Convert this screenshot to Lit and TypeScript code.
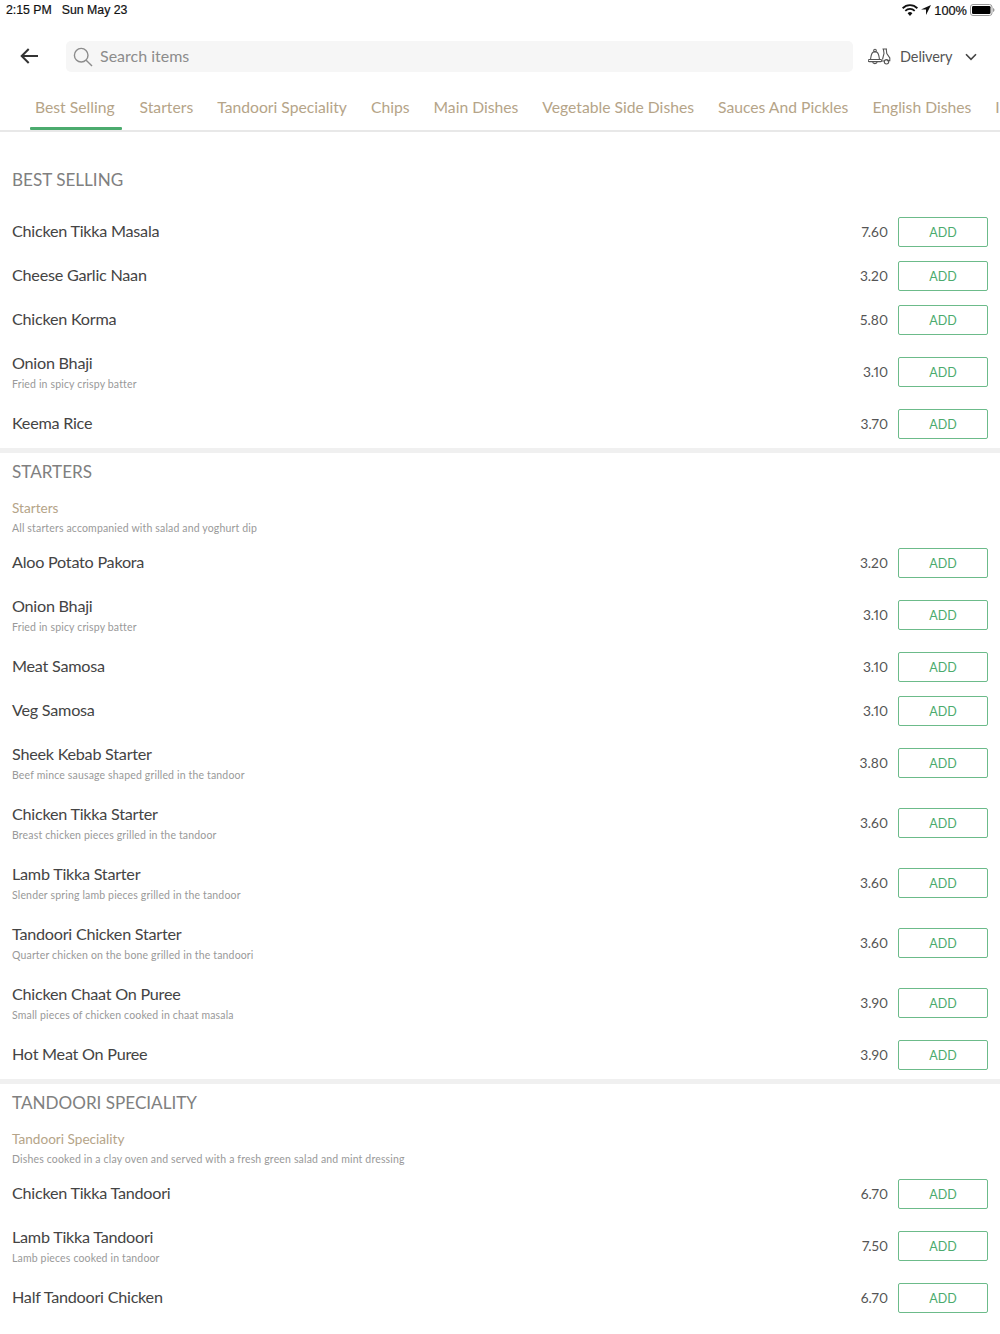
import { LitElement, html, css, svg } from "lit";
import { customElement } from "lit/decorators.js";

type Item = { n: string; p: string; d?: string };
type Sec = { t: string; sub?: string; note?: string; items: Item[] };

const TABS = ["Best Selling", "Starters", "Tandoori Speciality", "Chips", "Main Dishes", "Vegetable Side Dishes", "Sauces And Pickles", "English Dishes", "Indian Dishes"];

const SECTIONS: Sec[] = [
  { t: "BEST SELLING", items: [
    { n: "Chicken Tikka Masala", p: "7.60" },
    { n: "Cheese Garlic Naan", p: "3.20" },
    { n: "Chicken Korma", p: "5.80" },
    { n: "Onion Bhaji", p: "3.10", d: "Fried in spicy crispy batter" },
    { n: "Keema Rice", p: "3.70" },
  ]},
  { t: "STARTERS", sub: "Starters", note: "All starters accompanied with salad and yoghurt dip", items: [
    { n: "Aloo Potato Pakora", p: "3.20" },
    { n: "Onion Bhaji", p: "3.10", d: "Fried in spicy crispy batter" },
    { n: "Meat Samosa", p: "3.10" },
    { n: "Veg Samosa", p: "3.10" },
    { n: "Sheek Kebab Starter", p: "3.80", d: "Beef mince sausage shaped grilled in the tandoor" },
    { n: "Chicken Tikka Starter", p: "3.60", d: "Breast chicken pieces grilled in the tandoor" },
    { n: "Lamb Tikka Starter", p: "3.60", d: "Slender spring lamb pieces grilled in the tandoor" },
    { n: "Tandoori Chicken Starter", p: "3.60", d: "Quarter chicken on the bone grilled in the tandoori" },
    { n: "Chicken Chaat On Puree", p: "3.90", d: "Small pieces of chicken cooked in chaat masala" },
    { n: "Hot Meat On Puree", p: "3.90" },
  ]},
  { t: "TANDOORI SPECIALITY", sub: "Tandoori Speciality", note: "Dishes cooked in a clay oven and served with a fresh green salad and mint dressing", items: [
    { n: "Chicken Tikka Tandoori", p: "6.70" },
    { n: "Lamb Tikka Tandoori", p: "7.50", d: "Lamb pieces cooked in tandoor" },
    { n: "Half Tandoori Chicken", p: "6.70" },
  ]},
];

@customElement("app-root")
export class AppRoot extends LitElement {
  static styles = css`
    :host { display: block; width: 1000px; height: 1334px; overflow: hidden; background: #fff; font-family: Lato, "Open Sans", sans-serif; color: #444; font-feature-settings: "pnum"; }
    .status { height: 20px; display: flex; align-items: center; justify-content: space-between; padding: 0 5px 0 6px; font: 12.3px "Liberation Sans", sans-serif; color: #111; -webkit-text-stroke: .2px #111; }
    .status .l { display: flex; gap: 10px; }
    .status .r { display: flex; align-items: center; gap: 3px; font-size: 12.8px; }
    .bar { height: 72px; display: flex; align-items: center; padding-top: 1px; box-sizing: border-box; }
    .back { width: 66px; display: flex; justify-content: center; padding: 0 9px 2px 0; box-sizing: border-box; }
    .search { width: 787px; height: 31px; background: #f6f6f6; border-radius: 5px; display: flex; align-items: center; gap: 7px; padding-left: 7px; box-sizing: border-box; color: #8c8c8c; font-size: 16px; }
    .search span { margin-bottom: 2px; }
    .del { display: flex; align-items: center; margin-left: 15px; font-size: 14.5px; letter-spacing: -.1px; color: #555; }
    .del .txt { margin: 0 13px 1px 9px; }
    .tabs { height: 38px; display: flex; gap: 12px; padding-left: 29px; border-bottom: 2px solid #e8e8e8; overflow: hidden; box-sizing: content-box; }
    .tab { flex: none; padding: 0 6px; height: 38px; box-sizing: border-box; font-size: 15.7px; color: #b5a488; line-height: 30px; position: relative; }
    .tab.on { padding-right: 7px; }
    .tab.on::after { content: ""; position: absolute; left: 1px; right: 0; bottom: 0; height: 3px; background: #4bab6e; border-radius: 1px; }
    .sec { border-bottom: 5px solid #f0f0f0; padding-bottom: 2px; }
    .sec:last-child { border-bottom: 0; }
    .title { height: 37px; display: flex; align-items: center; padding-left: 12px; font-size: 17.1px; color: #808080; }
    .title.first { height: 36px; margin: 29px 0 13px; }
    .head { padding: 0 12px 5px; }
    .sub { font-size: 13.6px; color: #b5a488; line-height: 20px; margin-top: 8px; height: 22px; }
    .note { font-size: 10.5px; color: #999; line-height: 16px; letter-spacing: .16px; }
    .row { display: flex; align-items: center; padding: 0 12px; height: 44px; }
    .row.tall { height: 60px; }
    .info { flex: 1; }
    .name { font-size: 16.2px; letter-spacing: -.25px; line-height: 22px; color: #444; padding-bottom: 2px; }
    .tall .name { padding-bottom: 1px; }
    .desc { font-size: 10.5px; line-height: 16px; margin-top: 1px; color: #999; letter-spacing: .16px; }
    .price { font-size: 13.8px; color: #555; margin-right: 10px; padding-bottom: 2px; }
    .add { width: 90px; height: 30px; box-sizing: border-box; border: 1px solid #6cbb8a; border-radius: 2px; color: #4bab6e; font-size: 12.5px; display: flex; align-items: center; justify-content: center; }
  `;

  icons = {
    back: svg`<svg width="18" height="16" viewBox="0 0 18 16" fill="none" stroke="#333" stroke-width="2"><path d="M18 8H2M8.700 1 1.700 8l7 7"/></svg>`,
    search: svg`<svg width="20" height="20" viewBox="0 0 20 20" fill="none" stroke="#8c8c8c" stroke-width="1.4"><circle cx="8.200" cy="8.200" r="6.800"/><path d="M13.200 13.200 19 19"/></svg>`,
    chev: svg`<svg width="12" height="8" viewBox="0 0 12 8" fill="none" stroke="#444" stroke-width="1.600"><path d="M1 1.200 6 6.400l5-5.200"/></svg>`,
    del: svg`<svg width="23" height="17" viewBox="0 0 23 17" fill="none" stroke="#555" stroke-width="1.100"><path d="M2.500 11.500C3 9 3 5.500 5 4.200c1.300-.8 2.700-.8 4 0C11 5.500 11 9 11.500 11.500z"/><circle cx="7" cy="2.600" r="1.300"/><path d="M1.200 11.500h11.600c.7 0 1 .5 1 1.100 0 .6-.4 1-1 1H1.200c-.6 0-1-.4-1-1 0-.6.3-1.100 1-1.100zM4.500 13.600c.2 1.200 1.100 2 2.400 2s2.200-.8 2.400-2M13.800 13h2.700M14.500 1h4.500M15.400 1l.6 4.500-1.500 6M18.200 1l.6 4.500 3 4.500v2.600h-3"/><circle cx="18.500" cy="13.800" r="2.200"/></svg>`,
    wifi: svg`<svg width="16" height="12" viewBox="0 0 16 12"><path d="M8 12 5.600 9.300a3.300 3.300 0 0 1 4.800 0zM3.900 7.600 2.700 6.300a7.500 7.500 0 0 1 10.600 0l-1.200 1.300a5.700 5.700 0 0 0-8.200 0zM1.300 4.900 0 3.500a11.200 11.200 0 0 1 16 0l-1.300 1.400a9.400 9.400 0 0 0-13.400 0z" fill="#111"/></svg>`,
    loc: svg`<svg width="10" height="10" viewBox="0 0 10 10"><path d="M10 0 0 4.600h5V10z" fill="#111"/></svg>`,
    batt: svg`<svg width="25" height="12" viewBox="0 0 25 12"><rect x=".5" y=".5" width="21.500" height="11" rx="2.500" fill="none" stroke="#999"/><rect x="2" y="2" width="18.500" height="8" rx="1.200" fill="#000"/><path d="M23 4v4c.8-.3 1.500-1 1.500-2s-.7-1.700-1.500-2z" fill="#999"/></svg>`,
  };

  renderRow(i: Item) {
    return html`<div class="row ${i.d ? "tall" : ""}">
      <div class="info"><div class="name">${i.n}</div>${i.d ? html`<div class="desc">${i.d}</div>` : ""}</div>
      <div class="price">${i.p}</div>
      <div class="add">ADD</div>
    </div>`;
  }

  render() {
    return html`
      <div class="status">
        <div class="l"><span>2:15 PM</span><span>Sun May 23</span></div>
        <div class="r">${this.icons.wifi}${this.icons.loc}<span>100%</span>${this.icons.batt}</div>
      </div>
      <div class="bar">
        <div class="back">${this.icons.back}</div>
        <div class="search">${this.icons.search}<span>Search items</span></div>
        <div class="del">${this.icons.del}<span class="txt">Delivery</span>${this.icons.chev}</div>
      </div>
      <div class="tabs">${TABS.map((t, i) => html`<div class="tab ${i === 0 ? "on" : ""}">${t}</div>`)}</div>
      ${SECTIONS.map((s, idx) => html`<div class="sec">
        <div class="title ${idx === 0 ? "first" : ""}">${s.t}</div>
        ${s.sub ? html`<div class="head"><div class="sub">${s.sub}</div><div class="note">${s.note}</div></div>` : ""}
        ${s.items.map((i) => this.renderRow(i))}
      </div>`)}
    `;
  }
}
